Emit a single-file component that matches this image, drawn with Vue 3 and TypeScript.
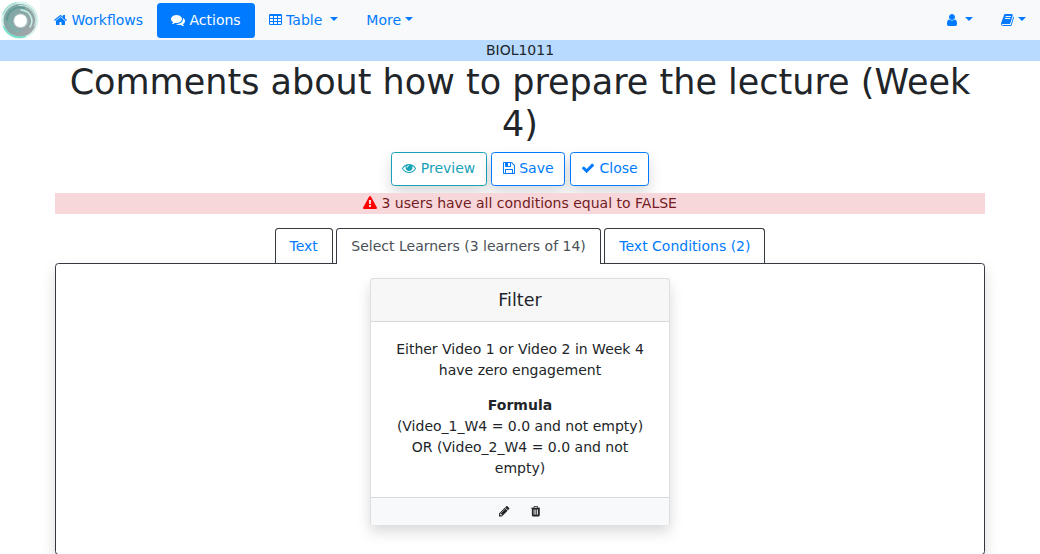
<script setup lang="ts">
import { h } from 'vue'

interface Glyph { x: number; w: number; d: string }

const glyphs: Record<string, Glyph> = {
  home: { x: 64, w: 1664, d: 'M1472 992v480q0 26-19 45t-45 19h-384v-384h-256v384h-384q-26 0-45-19t-19-45v-480q0-1 .5-3t.5-3l575-474 575 474q1 2 1 6zm223-69l-62 74q-8 9-21 11h-3q-13 0-21-7l-692-577-692 577q-12 8-24 7-13-2-21-11l-62-74q-8-10-7-23.5t11-21.5l719-599q32-26 76-26t76 26l244 204v-195q0-14 9-23t23-9h192q14 0 23 9t9 23v408l219 182q10 8 11 21.5t-7 23.5z' },
  comments: { x: 0, w: 1792, d: 'M1408 768q0 139-94 257t-256.5 186.5-353.5 68.5q-86 0-176-16-124 88-278 128-36 9-86 16h-3q-11 0-20.5-8t-11.5-21q-1-3-1-6.5t.5-6.5 2-6l2.5-5 3.5-5.5 4-5 4.5-5 4-4.5q5-6 23-25t26-29.5 22.5-29 25-38.5 20.5-44q-124-72-195-177t-71-224q0-139 94-257t256.5-186.5 353.5-68.5 353.5 68.5 256.5 186.5 94 257zm384 256q0 120-71 224.5t-195 176.5q10 24 20.5 44t25 38.5 22.5 29 26 29.5 23 25q1 1 4 4.5t4.5 5 4 5 3.5 5.5l2.5 5 2 6 .5 6.5-1 6.5q-3 14-13 22t-22 7q-50-7-86-16-154-40-278-128-90 16-176 16-271 0-472-132 58 4 88 4 161 0 309-45t264-129q125-92 192-212t67-254q0-77-23-152 129 71 204 178t75 230z' },
  table: { x: 64, w: 1664, d: 'M224 128h1344a160 160 0 0 1 160 160v1088a160 160 0 0 1-160 160h-1344a160 160 0 0 1-160-160v-1088a160 160 0 0 1 160-160zM192 416v192q0 32 32 32h320q32 0 32-32v-192q0-32-32-32h-320q-32 0-32 32zM704 416v192q0 32 32 32h320q32 0 32-32v-192q0-32-32-32h-320q-32 0-32 32zM1216 416v192q0 32 32 32h320q32 0 32-32v-192q0-32-32-32h-320q-32 0-32 32zM192 800v192q0 32 32 32h320q32 0 32-32v-192q0-32-32-32h-320q-32 0-32 32zM704 800v192q0 32 32 32h320q32 0 32-32v-192q0-32-32-32h-320q-32 0-32 32zM1216 800v192q0 32 32 32h320q32 0 32-32v-192q0-32-32-32h-320q-32 0-32 32zM192 1184v192q0 32 32 32h320q32 0 32-32v-192q0-32-32-32h-320q-32 0-32 32zM704 1184v192q0 32 32 32h320q32 0 32-32v-192q0-32-32-32h-320q-32 0-32 32zM1216 1184v192q0 32 32 32h320q32 0 32-32v-192q0-32-32-32h-320q-32 0-32 32z' },
  user: { x: 256, w: 1280, d: 'M1536 1399q0 109-62.5 187t-150.5 78h-854q-88 0-150.5-78t-62.5-187q0-85 8.5-160.5t31.5-152 58.5-131 94-89 134.5-34.5q131 128 313 128t313-128q76 0 134.5 34.5t94 89 58.5 131 31.5 152 8.5 160.5zm-256-887q0 159-112.5 271.5t-271.5 112.5-271.5-112.5-112.5-271.5 112.5-271.5 271.5-112.5 271.5 112.5 112.5 271.5z' },
  book: { x: 64, w: 1664, d: 'M1703 478q40 57 18 129l-275 906q-19 64-76.5 107.5t-122.5 43.5h-923q-77 0-148.5-53.5t-99.5-131.5q-24-67-2-127 0-4 3-27t4-37q1-8-3-21.5t-3-19.5q2-11 8-21t16.5-23.5 16.5-23.5q23-38 45-91.5t30-91.5q3-10 .5-30t-.5-28q3-11 17-28t17-23q21-36 42-92t25-90q1-9-2.5-32t.5-28q4-13 22-30.5t22-22.5q19-26 42.5-84.5t27.5-96.5q1-8-3-25.5t-2-26.5q2-8 9-18t18-23 17-21q8-12 16.5-30.5t15-35 16-36 19.5-32 26.5-23.5 36-11.5 47.5 5.5l-1 3q38-9 51-9h761q74 0 114 56t18 130l-274 906q-36 119-71.5 153.5t-128.5 34.5h-869q-27 0-38 15-11 16-1 43 24 70 144 70h923q29 0 56-15.5t35-41.5l300-987q7-22 5-57 38 15 59 43zm-1064 2q-4 13 2 22.5t20 9.5h608q13 0 25.5-9.5t16.5-22.5l21-64q4-13-2-22.5t-20-9.5h-608q-13 0-25.5 9.5t-16.5 22.5zm-83 256q-4 13 2 22.5t20 9.5h608q13 0 25.5-9.5t16.5-22.5l21-64q4-13-2-22.5t-20-9.5h-608q-13 0-25.5 9.5t-16.5 22.5z' },
  eye: { x: 0, w: 1792, d: 'M1664 960q-152-236-381-353 61 104 61 225 0 185-131.5 316.5t-316.5 131.5-316.5-131.5-131.5-316.5q0-121 61-225-229 117-381 353 133 205 333.5 326.5t434.5 121.5 434.5-121.5 333.5-326.5zm-720-384q0-20-14-34t-34-14q-125 0-214.5 89.5t-89.5 214.5q0 20 14 34t34 14 34-14 14-34q0-86 61-147t147-61q20 0 34-14t14-34zm848 384q0 34-20 69-140 230-376.5 368.5t-499.5 138.5-499.5-139-376.5-368q-20-35-20-69t20-69q140-229 376.5-368t499.5-139 499.5 139 376.5 368q20 35 20 69z' },
  floppy: { x: 128, w: 1536, d: 'M512 1536h768v-384h-768v384zm896 0h128v-896q0-14-10-38.5t-20-34.5l-281-281q-10-10-34-20t-39-10v416q0 40-28 68t-68 28h-576q-40 0-68-28t-28-68v-416h-128v1280h128v-416q0-40 28-68t68-28h832q40 0 68 28t28 68v416zm-384-928v-320q0-13-9.5-22.5t-22.5-9.5h-192q-13 0-22.5 9.5t-9.5 22.5v320q0 13 9.5 22.5t22.5 9.5h192q13 0 22.5-9.5t9.5-22.5zm640 32v928q0 40-28 68t-68 28h-1344q-40 0-68-28t-28-68v-1344q0-40 28-68t68-28h928q40 0 88 20t76 48l280 280q28 28 48 76t20 88z' },
  check: { x: 0, w: 1792, d: 'M1671 566q0 40-28 68l-724 724-136 136q-28 28-68 28t-68-28l-136-136-362-362q-28-28-28-68t28-68l136-136q28-28 68-28t68 28l294 295 656-657q28-28 68-28t68 28l136 136q28 28 28 68z' },
  warning: { x: 0, w: 1792, d: 'M1024 1375v-190q0-14-9.5-23.5t-22.5-9.5h-192q-13 0-22.5 9.5t-9.5 23.5v190q0 14 9.5 23.5t22.5 9.5h192q13 0 22.5-9.5t9.5-23.5zm-2-374l18-459q0-12-10-19-13-11-24-11h-220q-11 0-24 11-10 7-10 21l17 457q0 10 10 16.5t24 6.5h185q14 0 23.5-6.5t10.5-16.5zm-14-934l768 1408q35 63-2 126-17 29-46.5 46t-63.5 17h-1536q-34 0-63.5-17t-46.5-46q-37-63-2-126l768-1408q17-31 47-49t65-18 65 18 47 49z' },
  pencil: { x: 128, w: 1536, d: 'M491 1536l91-91-235-235-91 91v107h128v128h107zm523-928q0-22-22-22-10 0-17 7l-542 542q-7 7-7 17 0 22 22 22 10 0 17-7l542-542q7-7 7-17zm-54-192l416 416-832 832h-416v-416zm683 96q0 53-37 90l-166 166-416-416 166-165q36-38 90-38 53 0 91 38l235 234q37 39 37 91z' },
  trash: { x: 192, w: 1408, d: 'M704 1376v-704q0-14-9-23t-23-9h-64q-14 0-23 9t-9 23v704q0 14 9 23t23 9h64q14 0 23-9t9-23zm256 0v-704q0-14-9-23t-23-9h-64q-14 0-23 9t-9 23v704q0 14 9 23t23 9h64q14 0 23-9t9-23zm256 0v-704q0-14-9-23t-23-9h-64q-14 0-23 9t-9 23v704q0 14 9 23t23 9h64q14 0 23-9t9-23zm-544-992h448l-48-117q-7-9-17-11h-317q-10 2-17 11zm928 32v64q0 14-9 23t-23 9h-96v948q0 83-47 143.5t-113 60.5h-832q-66 0-113-58.5t-47-141.5v-952h-96q-14 0-23-9t-9-23v-64q0-14 9-23t23-9h309l70-167q15-37 54-63t79-26h320q40 0 79 26t54 63l70 167h309q14 0 23 9t9 23z' },
}

const Icon = (props: { name: string }) => {
  const g = glyphs[props.name]
  return h('svg', { viewBox: `${g.x} 0 ${g.w} 1792`, style: { width: `${g.w / 1792}em` }, 'aria-hidden': 'true' },
    [h('path', { d: g.d, fill: 'currentColor', 'fill-rule': 'evenodd' })])
}
Icon.props = ['name']

const actions = [
  { icon: 'eye', label: 'Preview', kind: 'info' },
  { icon: 'floppy', label: 'Save', kind: 'primary' },
  { icon: 'check', label: 'Close', kind: 'primary' },
]
const tabs = [
  { label: 'Text', active: false },
  { label: 'Select Learners (3 learners of 14)', active: true },
  { label: 'Text Conditions (2)', active: false },
]
</script>

<template>
  <div class="page">
    <nav class="navbar">
      <a class="brand">
        <svg class="logo" viewBox="0 0 40 40">
          <defs>
            <linearGradient id="ring" x1="0" y1="0" x2="1" y2="1">
              <stop offset="0" stop-color="#77aaa5" />
              <stop offset=".5" stop-color="#8ca5a5" />
              <stop offset="1" stop-color="#aaa6ad" />
            </linearGradient>
          </defs>
          <rect width="40" height="40" fill="#fff" />
          <circle cx="19.7" cy="20" r="18.6" fill="#d9f3ed" />
          <circle cx="19.9" cy="20.3" r="16.4" fill="url(#ring)" />
          <g fill="none" stroke-linecap="round">
            <path d="M4 27A17 17 0 0 0 25 36.5" stroke="#6fe3cc" stroke-width="1.8" />
            <path d="M3 14A18 18 0 0 1 16 3" stroke="#a4ddd2" stroke-width="1.5" />
            <path d="M7 20A13 13 0 0 1 24 8" stroke="#629b96" stroke-width="2" />
            <path d="M19 5.5A15 15 0 0 1 34.5 26" stroke="#c2e6e0" stroke-width="1.2" />
            <path d="M21 10A11 11 0 0 1 30 27" stroke="#c9f5ec" stroke-width="1.4" />
            <path d="M10 19A10 10 0 0 0 20 31" stroke="#67bdb0" stroke-width="1.2" />
          </g>
          <circle cx="20.5" cy="20.8" r="7.3" fill="#b8cecc" />
          <circle cx="20.5" cy="20.8" r="6.3" fill="#fff" />
        </svg>
      </a>
      <a class="nav-link"><Icon class="icon" name="home" /> Workflows</a>
      <a class="nav-link current"><Icon class="icon" name="comments" /> Actions</a>
      <a class="nav-link"><Icon class="icon" name="table" /> Table <span class="caret" /></a>
      <a class="nav-link">More<span class="caret" /></a>
      <div class="nav-end">
        <a class="nav-link"><Icon class="icon" name="user" /> <span class="caret" /></a>
        <a class="nav-link"><Icon class="icon" name="book" /><span class="caret" /></a>
      </div>
    </nav>
    <div class="course">BIOL1011</div>
    <main class="container">
      <h1>Comments about how to prepare the lecture (Week 4)</h1>
      <div class="actions">
        <button v-for="a in actions" :key="a.label" class="btn" :class="a.kind"><Icon class="icon" :name="a.icon" /> {{ a.label }}</button>
      </div>
      <div class="alert"><Icon class="icon danger" name="warning" /> 3 users have all conditions equal to FALSE</div>
      <div class="tabs">
        <a v-for="t in tabs" :key="t.label" class="tab" :class="{ active: t.active }">{{ t.label }}</a>
      </div>
      <section class="panel">
        <article class="card">
          <h5 class="card-header">Filter</h5>
          <div class="card-body">
            <p>Either Video 1 or Video 2 in Week 4 have zero engagement</p>
            <div><strong>Formula</strong><br>(Video_1_W4 = 0.0 and not empty) OR (Video_2_W4 = 0.0 and not empty)</div>
          </div>
          <div class="card-footer">
            <button class="tool"><Icon class="icon" name="pencil" /></button>
            <button class="tool"><Icon class="icon" name="trash" /></button>
          </div>
        </article>
      </section>
    </main>
  </div>
</template>

<style>
html { font-size: 14px; }
body { margin: 0; overflow: hidden; background: #fff; }
</style>

<style scoped>
* { box-sizing: border-box; }
.page { height: 554px; overflow: hidden; font: 14px/1.5 "DejaVu Sans", sans-serif; color: #212529; text-align: center; }
.icon { display: inline-block; height: 1em; vertical-align: -2px; }
.navbar { display: flex; align-items: center; height: 40px; background: #f8f9fa; }
.brand, .logo { display: block; width: 40px; height: 40px; }
.nav-link { padding: 7px 14px; color: #007bff; white-space: nowrap; }
.nav-link.current { background: #007bff; color: #fff; border-radius: 3.5px; }
.nav-end { display: flex; margin-left: auto; }
.caret { display: inline-block; margin-left: .255em; vertical-align: .255em; border-top: .3em solid; border-right: .3em solid transparent; border-left: .3em solid transparent; }
.course { height: 21px; background: #b8daff; }
.container { width: 930px; margin: 0 auto; }
h1 { margin: 0 0 7px; font-size: 35px; font-weight: 400; line-height: 1.2; }
.actions { display: flex; justify-content: center; align-items: flex-start; gap: 4.45px; height: 41px; }
.btn { height: 34px; padding: 5.25px 10.5px 5.75px; margin: 0; font: inherit; background: #fff; border: 1px solid; border-radius: 3.5px; box-shadow: 0 7px 14px rgba(0, 0, 0, .15); }
.btn.info { color: #17a2b8; }
.btn.primary { color: #007bff; }
.alert { position: relative; height: 21px; background: #f8d7da; color: #721c24; }
.danger { color: #f00; }
.tabs { display: flex; justify-content: center; gap: 3.5px; margin-top: 14px; }
.tab { position: relative; padding: 7px 14px; height: 36px; border: 1px solid #343a40; border-bottom: 0; border-radius: 3.5px 3.5px 0 0; color: #007bff; }
.tab.active { z-index: 1; background: #fff; color: #495057; }
.panel { height: 292px; margin-top: -1px; padding-top: 14px; border: 1px solid #343a40; border-radius: 3.5px; box-shadow: 0 7px 14px rgba(0, 0, 0, .15); }
.card { width: 300px; height: 247px; margin: 0 auto; border: 1px solid rgba(0, 0, 0, .125); border-bottom: 0; border-radius: 3.5px 3.5px 1px 1px; box-shadow: 0 7px 14px rgba(0, 0, 0, .15); }
.card-header { margin: 0; padding: 10.5px 17.5px; font-size: 17.5px; font-weight: 400; line-height: 1.2; background: rgba(0, 0, 0, .03); border-bottom: 1px solid rgba(0, 0, 0, .125); }
.card-body { height: 175px; padding: 17px 17.5px 0; }
.card-body p { margin: 0 0 14px; }
.card-footer { display: flex; justify-content: center; gap: 6px; height: 28px; border-top: 1px solid #d6d9dc; background: #f8f9fa; }
.tool { width: 25px; height: 27px; padding: 0; border: 0; background: none; color: #212529; font-size: 12.25px; line-height: 27px; }
</style>
